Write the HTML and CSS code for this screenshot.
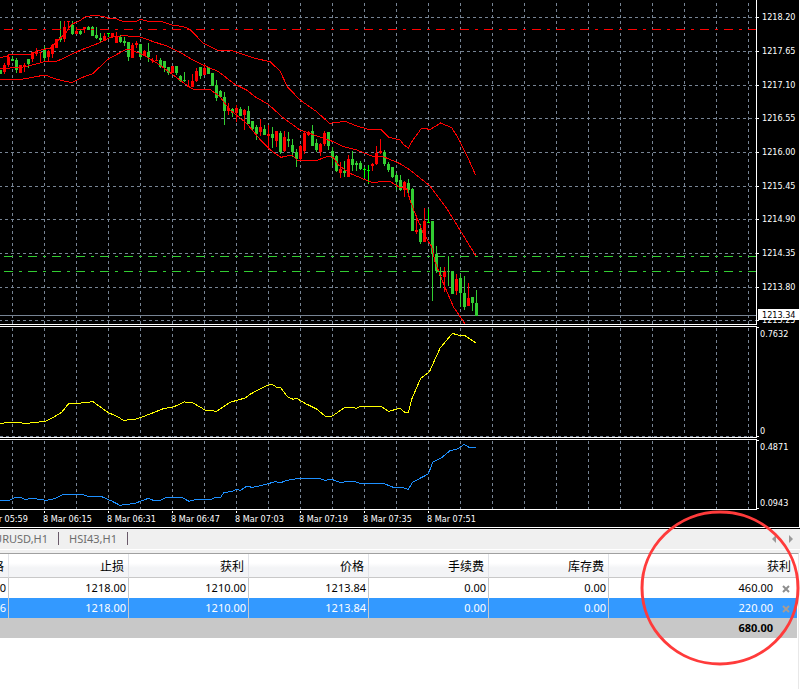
FILE: index.html
```html
<!DOCTYPE html>
<html lang="zh-CN">
<head>
<meta charset="utf-8">
<title>Terminal</title>
<link rel="stylesheet" href="styles.css">
</head>
<body>
<main class="app">
  <section class="charts">
    <svg class="defs" width="0" height="0" aria-hidden="true">
      <defs>
        <g id="columns"></g>
      </defs>
    </svg>
    <div class="pane pane-price">
      <svg class="plot" id="price">
        <g id="price-rows"></g>
        <use href="#columns" y="3"/>
        <line class="bid" x1="0" x2="100%" y1="315.5" y2="315.5"/>
        <g id="candles"></g>
        <g class="series" transform="scale(0.33333)">
          <polyline class="band" points="0,172 20,170 30,163 90,163 110,153 130,148 150,145 175,120 200,95 215,72 235,65 255,51 278,46 310,49 325,55 350,57 373,66 410,63 421,58 440,63 485,65 517,75 550,80 570,88 610,130 650,150 700,153 735,165 765,175 810,185 840,213 862,260 900,300 950,335 988,370 1035,364 1070,378 1105,388 1143,388 1167,412 1200,420 1212,435 1225,444 1240,418 1263,387 1275,385 1290,389 1322,369 1355,383 1375,415 1400,465 1427,526"/>
          <polyline class="band" points="0,205 60,203 90,197 130,186 170,184 200,170 240,151 300,128 330,112 370,107 420,111 460,125 500,138 540,157 575,178 610,195 655,215 705,253 740,270 765,290 805,313 850,354 900,390 960,411 1000,425 1030,440 1070,450 1115,468 1150,470 1200,491 1230,510 1290,558 1340,625 1380,690 1429,770"/>
          <polyline class="band" points="0,240 70,237 135,225 170,238 215,248 240,235 278,221 325,177 375,150 395,150 430,165 475,192 530,233 575,266 590,269 630,268 660,290 690,330 740,370 780,418 815,453 843,472 875,465 892,481 950,481 987,468 1000,472 1015,495 1050,520 1090,537 1115,547 1170,544 1200,563 1220,565 1230,600 1245,640 1270,700 1295,740 1305,785 1330,850 1360,920 1395,972"/>
        </g>
        <line class="order stop" x1="4" x2="100%" y1="29.5" y2="29.5"/>
        <line class="order open" x1="-20" x2="100%" y1="256.5" y2="256.5"/>
        <line class="order open" x1="-20" x2="100%" y1="271.5" y2="271.5"/>
      </svg>
      <svg class="scale" id="price-scale"></svg>
    </div>
    <div class="pane pane-upper">
      <svg class="plot framed">
        <use href="#columns" y="1"/>
        <line class="grid" x1="0" x2="100%" y1="109.5" y2="109.5"/>
        <g class="series" transform="translate(0 -17) scale(0.33333)">
          <polyline class="yellow" points="0,340 35,337 80,340 135,334 155,325 185,307 205,282 235,280 270,276 280,276 325,308 355,321 373,333 385,328 410,327 450,312 490,296 520,291 553,276 575,277 600,291 615,300 650,304 690,277 735,264 750,253 795,229 815,222 830,232 843,234 862,260 880,268 890,265 915,280 950,297 975,318 990,321 1000,316 1035,292 1055,292 1068,295 1080,290 1145,290 1165,304 1200,295 1215,307 1225,307 1235,268 1262,205 1288,186 1320,115 1357,70 1380,77 1395,77 1427,98"/>
        </g>
      </svg>
      <svg class="scale">
        <path class="tick" d="M0 1.5h2M0 110.5h2"/>
        <text x="3" y="11">0.7632</text>
        <text x="3" y="108">0</text>
      </svg>
    </div>
    <div class="pane pane-lower">
      <svg class="plot framed">
        <use href="#columns" y="1"/>
        <g class="series" transform="translate(0 -130) scale(0.33333)">
          <polyline class="blue" points="0,571 30,570 45,563 65,563 75,569 95,565 140,571 165,566 190,553 245,553 265,559 305,560 335,573 360,586 405,580 445,565 460,571 480,571 500,562 545,562 567,574 590,568 630,570 645,562 662,562 672,547 695,545 710,538 722,541 740,529 757,532 795,524 825,515 843,518 860,511 900,505 935,507 958,505 975,511 995,508 1020,517 1060,514 1085,521 1150,520 1180,532 1210,533 1225,538 1237,517 1285,492 1298,457 1325,443 1350,422 1370,418 1393,403 1410,414 1427,412"/>
        </g>
      </svg>
      <svg class="scale">
        <path class="tick" d="M0 1.5h2M0 69.5h2"/>
        <text x="3" y="11">0.4871</text>
        <text x="3" y="67">0.0943</text>
      </svg>
    </div>
    <svg class="times" id="times"></svg>
  </section>

  <nav class="tabs" aria-label="图表">
    <div class="tab-list">
      <button type="button" class="tab">EURUSD,H1</button>
      <button type="button" class="tab">HSI43,H1</button>
    </div>
    <div class="arrows">
      <button type="button" class="arrow" aria-label="向左"><svg width="4" height="8"><path d="M4 0v8L0 4z"/></svg></button>
      <button type="button" class="arrow" aria-label="向右"><svg width="4" height="8"><path d="M0 0v8l4-4z"/></svg></button>
    </div>
  </nav>

  <section class="orders">
    <div class="sheet">
      <table>
        <colgroup><col class="c"><col class="c"><col class="c"><col class="c"><col class="c"><col class="c"><col></colgroup>
        <thead>
          <tr><th>价格</th><th>止损</th><th>获利</th><th>价格</th><th>手续费</th><th>库存费</th><th>获利</th></tr>
        </thead>
        <tbody>
          <tr>
            <td>0</td><td>1218.00</td><td>1210.00</td><td>1213.84</td><td>0.00</td><td>0.00</td>
            <td class="profit">460.00<button type="button" class="close" aria-label="平仓"><svg width="8" height="8"><path d="M1 1l6 6M7 1l-6 6"/></svg></button></td>
          </tr>
          <tr class="selected">
            <td>6</td><td>1218.00</td><td>1210.00</td><td>1213.84</td><td>0.00</td><td>0.00</td>
            <td class="profit">220.00<button type="button" class="close" aria-label="平仓"><svg width="8" height="8"><path d="M1 1l6 6M7 1l-6 6"/></svg></button></td>
          </tr>
        </tbody>
        <tfoot>
          <tr><td colspan="7" class="total">680.00</td></tr>
        </tfoot>
      </table>
    </div>
    <svg class="marker" width="160" height="156" aria-hidden="true"><ellipse cx="80" cy="78" rx="78" ry="76"/></svg>
  </section>
</main>
<script src="chart.js"></script>
</body>
</html>
```
FILE: styles.css
```css
* {
  box-sizing: border-box;
}

body {
  margin: 0;
  background: #fff;
  font-family: "Noto Sans", "Noto Sans CJK SC", sans-serif;
  font-size: 11px;
  color: #000;
}

.app {
  display: flex;
  flex-direction: column;
  min-height: 100vh;
  overflow: hidden;
}

button {
  margin: 0;
  padding: 0;
  border: 0;
  background: none;
  font: inherit;
  color: inherit;
}

svg {
  display: block;
}

/* charts */
.charts {
  display: flex;
  flex-direction: column;
  gap: 1px;
  margin-right: 1px;
  background: #000;
  border-bottom: 1px solid #fff;
  font-family: "DejaVu Sans Condensed", "DejaVu Sans", sans-serif;
  font-size: 9px;
}

.defs {
  position: absolute;
}

.pane {
  display: grid;
  grid-template-columns: 1fr 42px;
}

.pane-price {
  height: 325px;
}

.pane-upper {
  height: 112px;
}

.pane-lower {
  height: 71px;
}

.plot {
  width: 100%;
  height: 100%;
  overflow: hidden;
  border-right: 1px solid #fff;
  border-bottom: 1px solid #fff;
  shape-rendering: crispEdges;
}

.framed {
  border-top: 1px solid #fff;
}

.scale {
  width: 100%;
  height: 100%;
  overflow: hidden;
}

.charts text {
  fill: #fff;
}

.tick {
  stroke: #fff;
  shape-rendering: crispEdges;
}

.grid {
  stroke: #778494;
  stroke-dasharray: 3 3;
}

.bid {
  stroke: #778494;
}

.series {
  fill: none;
}

.series polyline {
  vector-effect: non-scaling-stroke;
}

.band {
  stroke: #f00;
}

.yellow {
  stroke: #ff0;
}

.blue {
  stroke: #1e90ff;
}

.up {
  fill: #f00;
}

.down {
  fill: #32cd32;
}

.flat {
  fill: #0f0;
}

.order {
  stroke-dasharray: 9 6 3 6;
}

.stop {
  stroke: #f00;
}

.open {
  stroke: #32cd32;
}

.scale .tag {
  fill: #fff;
}

.scale .tag-text {
  fill: #000;
}

.times {
  width: 100%;
  height: 16px;
}

/* chart tabs */
.tabs {
  display: flex;
  justify-content: space-between;
  align-items: center;
  height: 25px;
  padding: 0 7px 5px 0;
  border-top: 1px solid #000;
  background: #f0f0f0;
  box-shadow: inset 0 -3px #f0f0f0, inset 0 -4px #fff;
  color: #6d6d6d;
}

.tab-list {
  display: flex;
  margin-left: -22px;
}

.tab {
  height: 13px;
  padding: 0 10px;
  border-right: 1px solid #6a5a6a;
  font-size: 11px;
  line-height: 13px;
}

.arrows {
  display: flex;
  gap: 13px;
}

.arrow {
  fill: #9a9a9a;
}

/* order table */
.orders {
  position: relative;
  flex: 1;
  background: #fff;
}

.sheet {
  margin-right: 1px;
  padding-right: 1px;
  border-top: 1px solid #a0a0a0;
  border-right: 1px solid #e8e8e8;
  overflow: hidden;
  min-height: 136px;
}

table {
  width: calc(100% + 111px);
  margin-left: -111px;
  border-collapse: separate;
  border-spacing: 0;
  table-layout: fixed;
}

.c {
  width: 120px;
}

th,
td {
  padding: 0 2px 0 0;
  border-right: 1px solid #c8c8c8;
  height: 20px;
  line-height: 20px;
  text-align: right;
}

th {
  height: 24px;
  padding-right: 4px;
  border-right-color: #e2e4e8;
  border-bottom: 1px solid #c8c8c8;
  background: linear-gradient(#fff 40%, #f3f4f6 60%, #f3f4f6);
  font-family: "Noto Sans CJK SC", sans-serif;
  font-size: 12px;
  font-weight: 400;
  line-height: 22px;
}

th:last-child,
td:last-child {
  border-right: 0;
}

th:last-child {
  padding-right: 6px;
}

.selected td {
  background: #39f;
  color: #fff;
}

td.profit {
  padding-right: 7px;
}

.close {
  width: 8px;
  margin-left: 9px;
  vertical-align: middle;
}

.close svg {
  fill: none;
  stroke: #8e8e8e;
  stroke-width: 2;
}

.selected .close svg {
  stroke: #a89c94;
}

td.total {
  padding-right: 24px;
  background: #c8c8c8;
  font-weight: 700;
}

.marker {
  position: absolute;
  top: -43px;
  right: 0;
  fill: none;
  stroke: #ff3b3b;
  stroke-width: 3;
  pointer-events: none;
}
```
FILE: chart.js
```js
const NS = 'http://www.w3.org/2000/svg';

function add(parent, name, attrs, text) {
  const node = document.createElementNS(NS, name);
  for (const key in attrs) node.setAttribute(key, attrs[key]);
  if (text) node.textContent = text;
  parent.appendChild(node);
}

const byId = id => document.getElementById(id);

// Vertical grid, one column per eight bars
for (let x = 12.5; x < 2600; x += 32) {
  add(byId('columns'), 'line', { class: 'grid', x1: x, x2: x, y1: 0, y2: 330 });
}

// Price grid and its scale
const rows = [
  [17, '1218.20'], [51, '1217.65'], [85, '1217.10'], [118, '1216.55'], [152, '1216.00'],
  [186, '1215.45'], [219, '1214.90'], [253, '1214.35'], [287, '1213.80'], [320, '1213.25']
];
const scale = byId('price-scale');
for (const [y, label] of rows) {
  add(byId('price-rows'), 'line', { class: 'grid', x1: -1, x2: '100%', y1: y + 0.5, y2: y + 0.5 });
  add(scale, 'path', { class: 'tick', d: `M0 ${y + 0.5}h2` });
  add(scale, 'text', { x: 5, y: y + 3 }, label);
}
add(scale, 'rect', { class: 'tag', x: 1, y: 309, width: 41, height: 11 });
add(scale, 'text', { class: 'tag-text', x: 5, y: 318 }, '1213.34');

// Time scale
['05:59', '06:15', '06:31', '06:47', '07:03', '07:19', '07:35', '07:51'].forEach((t, i) => {
  const x = 64 * i - 20;
  add(byId('times'), 'path', { class: 'tick', d: `M${x + 0.5} 0v2` });
  add(byId('times'), 'text', { x: x - 1, y: 11 }, '8 Mar ' + t);
});

// Bars: kind, high, body top, body bottom, low (thirds of a pixel)
const bars = `g210,210,222,222 r190,195,217,223 r163,171,195,200 g168,177,183,183 g175,180,209,220
r195,195,218,218 r190,196,202,215 g177,177,192,204 r155,157,177,185 r145,155,163,168
r155,156,158,185 g137,150,174,187 r150,153,172,187 r133,135,162,173 r117,117,143,143
g63,111,120,125 r63,82,118,125 r63,64,67,90 g63,76,102,105 r80,93,101,103
g87,93,101,105 r80,82,86,98 g78,82,90,90 g78,82,107,109 g82,105,113,116
g98,114,121,128 r99,108,122,122 f99,100,102,111 r100,100,112,112 r97,109,128,130
g106,110,125,128 g112,123,129,137 g125,126,171,182 r129,135,173,173 r123,129,136,144
g132,132,172,178 r149,153,168,168 g129,156,172,185 r174,181,183,188 r165,180,183,184
g174,180,201,203 g183,183,203,215 g201,201,218,224 r198,198,218,218 g197,198,219,226
g225,227,242,245 g217,239,244,246 r240,258,261,261 r222,243,261,261 r203,213,243,245
g200,200,228,236 r192,204,226,226 g201,201,223,223 g219,219,257,257 g240,255,293,302
g270,273,290,292 g276,291,333,375 r309,324,332,345 g324,326,338,350 r315,323,338,365
g321,327,348,348 r327,330,345,390 g318,333,372,372 g363,363,387,390 g375,381,402,420
r357,381,396,408 g375,386,405,405 r375,402,408,445 g381,402,413,443 r393,393,423,440
g393,398,456,461 r393,411,453,455 g396,417,423,441 g417,435,456,470 g447,456,477,500
r435,438,477,482 r396,399,453,461 r393,396,406,408 g375,393,438,438 g417,429,450,456
r429,432,456,468 r393,399,432,438 g396,396,438,450 g441,453,474,498 g465,468,513,516
r486,508,519,533 g483,513,519,530 r465,477,531,531 g453,477,495,513 g483,489,495,513
g483,489,507,509 f501,507,509,534 f495,510,512,552 r489,492,498,513 r438,459,492,495
r417,453,459,462 g450,456,492,498 g486,492,510,516 g501,501,531,534 g519,525,546,570
g525,540,569,572 r543,546,570,591 g537,548,570,585 g564,567,693,693 r645,690,696,702
g672,687,726,732 r624,663,726,726 f628,666,669,669 g663,663,762,903 g738,762,813,820
g801,825,828,864 r801,813,831,876 g768,813,815,858 g813,813,882,882 r822,837,873,885
g822,834,879,921 g828,879,921,930 r849,894,918,918 g891,891,909,933 g870,909,948,948`.split(/\s+/);
const kinds = { g: 'down', r: 'up', f: 'flat' };
bars.forEach((bar, i) => {
  const [high, top, bottom, low] = bar.slice(1).split(',').map(v => Math.round(v / 3));
  const x = 4 * i;
  const cls = kinds[bar[0]];
  add(byId('candles'), 'rect', { class: cls, x, y: high, width: 1, height: Math.max(1, low - high) });
  add(byId('candles'), 'rect', { class: cls, x: x - 1, y: top, width: 3, height: Math.max(1, bottom - top) });
});
```
